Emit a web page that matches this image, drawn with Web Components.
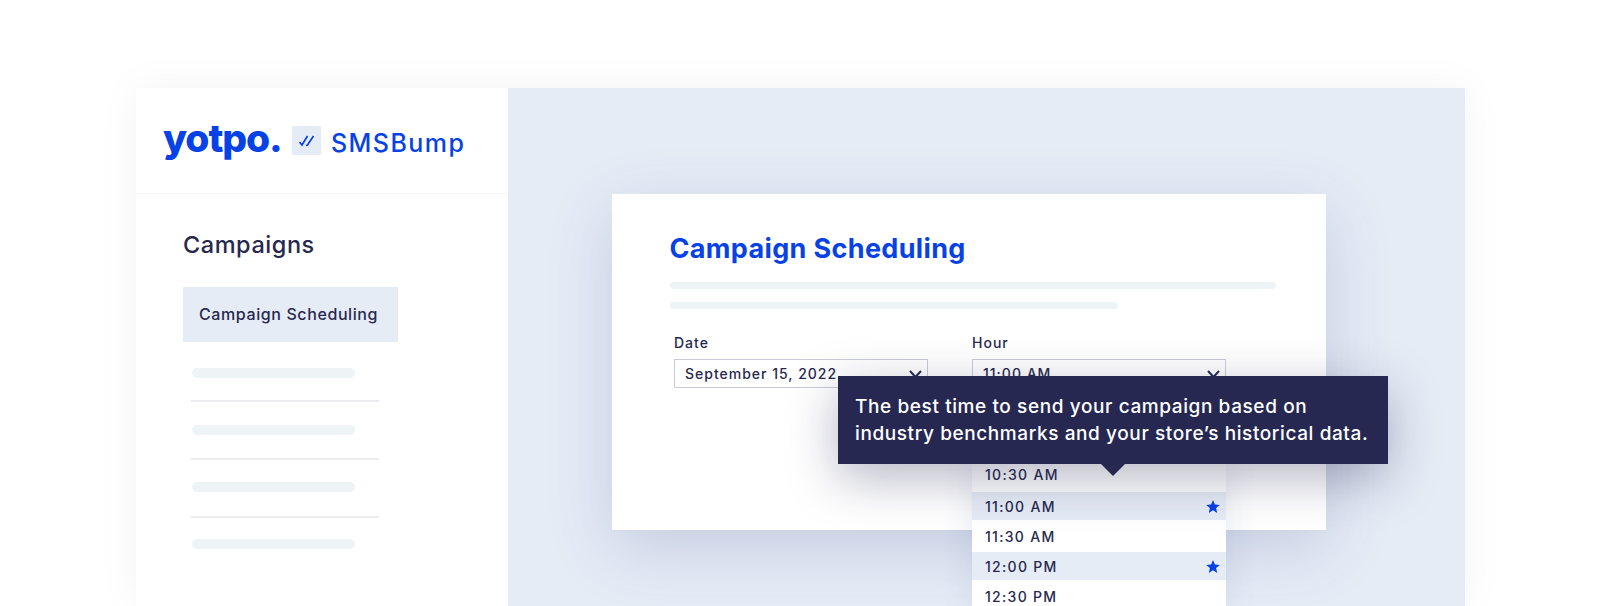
<!DOCTYPE html>
<html lang="en">
<head>
<meta charset="utf-8">
<title>Campaign Scheduling</title>
<style>
    html, body { margin: 0; height: 100%; background: #fff; overflow: hidden; }
    body { font-family: Inter, "Open Sans", sans-serif; color: #27284f; }
</style>
</head>
<body>
<app-window>
    <side-bar slot="side"></side-bar>
    <schedule-card slot="main"></schedule-card>
</app-window>

<script>
class AppWindow extends HTMLElement {
    connectedCallback() {
        this.attachShadow({ mode: 'open' }).innerHTML = `
            <style>
                :host {
                    display: grid;
                    grid-template-columns: 372px 957px;
                    width: 1329px;
                    height: 518px;
                    margin: 88px 0 0 136px;
                    background: #fff;
                    box-shadow: 0 0 40px rgba(39, 40, 79, 0.05);
                }
                .main {
                    background: #e6ecf6;
                    padding: 106px 139px 0 104px;
                    min-width: 0;
                }
            </style>
            <slot name="side"></slot>
            <div class="main"><slot name="main"></slot></div>
        `;
    }
}

class BrandLogo extends HTMLElement {
    connectedCallback() {
        this.attachShadow({ mode: 'open' }).innerHTML = `
            <style>
                :host {
                    display: flex;
                    align-items: center;
                    height: 105px;
                    padding-left: 27px;
                    border-bottom: 1px solid #f5f6fa;
                    color: #0742e6;
                }
                .yotpo {
                    width: 118px;
                    font: 800 39px/1 Inter, sans-serif;
                    letter-spacing: -1.1px;
                    margin-top: -6px;
                }
                .badge {
                    flex: none;
                    width: 29px;
                    height: 29px;
                    margin: 0 0 0 11px;
                    background: #e6ecf6;
                    border-radius: 1px;
                }
                .name {
                    font: 450 25px/1 Inter, sans-serif;
                    letter-spacing: 1.45px;
                    margin: 5px 0 0 10px;
                }
            </style>
            <span class="yotpo">yotpo.</span>
            <svg class="badge" viewBox="0 0 29 29" fill="none" stroke="currentColor" stroke-width="1.7">
                <path d="M7.5 16 10 19 15.5 10"/>
                <path d="M14 19.5 15.5 19 21.5 10"/>
            </svg>
            <span class="name">SMSBump</span>
        `;
    }
}

class SkeletonBar extends HTMLElement {
    connectedCallback() {
        this.attachShadow({ mode: 'open' }).innerHTML = `
            <style>
                :host {
                    display: block;
                    height: 10px;
                    border-radius: 5px;
                    background: #eef3f6;
                }
            </style>
        `;
    }
}

class SideBar extends HTMLElement {
    connectedCallback() {
        this.attachShadow({ mode: 'open' }).innerHTML = `
            <style>
                :host { display: block; background: #fff; }
                .nav { padding: 0 0 0 47px; }
                h2 {
                    margin: 0;
                    padding-top: 37px;
                    font: 500 23.5px/28px Inter, sans-serif;
                    letter-spacing: 0.55px;
                    color: #27284f;
                }
                .current {
                    width: 215px;
                    height: 55px;
                    margin-top: 28px;
                    padding-left: 16px;
                    box-sizing: border-box;
                    background: #e6ecf6;
                    font: 500 16px/55px Inter, sans-serif;
                    letter-spacing: 0.6px;
                    color: #27284f;
                }
                .rows { width: 188px; margin: 26px 0 0 8px; }
                .row { padding-left: 1px; }
                skeleton-bar { width: 163px; }
                .row + .row { border-top: 2px solid #eaecef; }
                .row:nth-child(2) { margin-top: 22px; padding-top: 23px; }
                .row:nth-child(3) { margin-top: 23px; padding-top: 22px; }
                .row:nth-child(4) { margin-top: 24px; padding-top: 21px; }
            </style>
            <brand-logo></brand-logo>
            <div class="nav">
                <h2>Campaigns</h2>
                <div class="current">Campaign Scheduling</div>
                <div class="rows">
                    <div class="row"><skeleton-bar></skeleton-bar></div>
                    <div class="row"><skeleton-bar></skeleton-bar></div>
                    <div class="row"><skeleton-bar></skeleton-bar></div>
                    <div class="row"><skeleton-bar></skeleton-bar></div>
                </div>
            </div>
        `;
    }
}

class SelectField extends HTMLElement {
    connectedCallback() {
        this.attachShadow({ mode: 'open' }).innerHTML = `
            <style>
                :host { display: block; width: 254px; }
                label {
                    display: block;
                    font: 500 14px/18px Inter, sans-serif;
                    letter-spacing: 1px;
                    color: #27284f;
                    margin-bottom: 7px;
                }
                .box {
                    display: flex;
                    align-items: center;
                    justify-content: space-between;
                    height: 29px;
                    box-sizing: border-box;
                    padding: 0 5px 0 10px;
                    border: 1px solid #c9cbd8;
                    background: #fff;
                    font: 500 14px/1 Inter, sans-serif;
                    letter-spacing: 1px;
                    color: #27284f;
                }
            </style>
            <label>${this.getAttribute('label')}</label>
            <div class="box">
                <span>${this.getAttribute('value')}</span>
                <svg width="13" height="8" viewBox="0 0 13 8" fill="none" stroke="#27284f" stroke-width="2">
                    <path d="M1 1 6.5 7 12 1"/>
                </svg>
            </div>
        `;
    }
}

class TimeOption extends HTMLElement {
    connectedCallback() {
        const star = this.hasAttribute('best') ? `
            <svg width="14" height="13" viewBox="0 0 14 13" fill="#0742e6">
                <path d="M7 0 8.9 4.5 13.8 4.9 10.1 8.1 11.2 12.9 7 10.3 2.8 12.9 3.9 8.1 0.2 4.9 5.1 4.5Z"/>
            </svg>` : '';
        this.attachShadow({ mode: 'open' }).innerHTML = `
            <style>
                :host {
                    display: flex;
                    align-items: center;
                    justify-content: space-between;
                    height: 28px;
                    box-sizing: border-box;
                    padding: 2px 6px 0 13px;
                    background: #fff;
                    font: 500 14px/1 Inter, sans-serif;
                    letter-spacing: 1.3px;
                    color: #27284f;
                }
                :host([best]) { background: #e6ecf6; }
                svg { margin-top: -2px; }
            </style>
            <span><slot></slot></span>
            ${star}
        `;
    }
}

class InfoTooltip extends HTMLElement {
    connectedCallback() {
        this.attachShadow({ mode: 'open' }).innerHTML = `
            <style>
                :host {
                    position: absolute;
                    left: 226px;
                    top: 182px;
                    width: 550px;
                    height: 88px;
                    box-sizing: border-box;
                    padding: 17px 0 0 17px;
                    background: #272852;
                    color: #fff;
                    font: 450 19px/27px Inter, sans-serif;
                    letter-spacing: 0.6px;
                    box-shadow: 0 14px 50px rgba(39, 40, 82, 0.34);
                }
                .arrow {
                    position: absolute;
                    left: 263px;
                    top: 88px;
                    width: 0;
                    height: 0;
                    border: 12.5px solid transparent;
                    border-bottom: 0;
                    border-top-color: #272852;
                }
            </style>
            <slot></slot>
            <span class="arrow"></span>
        `;
    }
}

class ScheduleCard extends HTMLElement {
    connectedCallback() {
        this.attachShadow({ mode: 'open' }).innerHTML = `
            <style>
                :host {
                    display: block;
                    position: relative;
                    height: 336px;
                    box-sizing: border-box;
                    padding: 39px 50px 0 57.5px;
                    background: #fff;
                    box-shadow: 0 18px 60px rgba(55, 75, 140, 0.2);
                }
                h1 {
                    margin: 0;
                    font: 650 27px/32px Inter, sans-serif;
                    letter-spacing: 0.35px;
                    color: #0742e6;
                }
                skeleton-bar { height: 7px; }
                .bar-one { margin-top: 17px; }
                .bar-two { margin-top: 13px; width: 448px; }
                .fields {
                    display: flex;
                    gap: 44px;
                    margin: 25px 0 0 4.5px;
                }
                time-menu {
                    position: absolute;
                    left: 360px;
                    top: 266px;
                    width: 254px;
                }
                .first { margin-bottom: 2px; }
            </style>
            <h1>Campaign Scheduling</h1>
            <skeleton-bar class="bar-one"></skeleton-bar>
            <skeleton-bar class="bar-two"></skeleton-bar>
            <div class="fields">
                <select-field label="Date" value="September 15, 2022"></select-field>
                <select-field label="Hour" value="11:00 AM"></select-field>
            </div>
            <time-menu>
                <time-option class="first">10:30 AM</time-option>
                <time-option best>11:00 AM</time-option>
                <time-option>11:30 AM</time-option>
                <time-option best>12:00 PM</time-option>
                <time-option>12:30 PM</time-option>
            </time-menu>
            <info-tooltip>The best time to send your campaign based on<br>industry benchmarks and your store’s historical data.</info-tooltip>
        `;
    }
}

class TimeMenu extends HTMLElement {
    connectedCallback() {
        this.attachShadow({ mode: 'open' }).innerHTML = `
            <style>
                :host {
                    display: flex;
                    flex-direction: column;
                    gap: 2px;
                    background: #fff;
                    box-shadow: 0 0 30px rgba(55, 75, 140, 0.12);
                }
            </style>
            <slot></slot>
        `;
    }
}

customElements.define('brand-logo', BrandLogo);
customElements.define('skeleton-bar', SkeletonBar);
customElements.define('side-bar', SideBar);
customElements.define('select-field', SelectField);
customElements.define('time-option', TimeOption);
customElements.define('time-menu', TimeMenu);
customElements.define('info-tooltip', InfoTooltip);
customElements.define('schedule-card', ScheduleCard);
customElements.define('app-window', AppWindow);
</script>
</body>
</html>
